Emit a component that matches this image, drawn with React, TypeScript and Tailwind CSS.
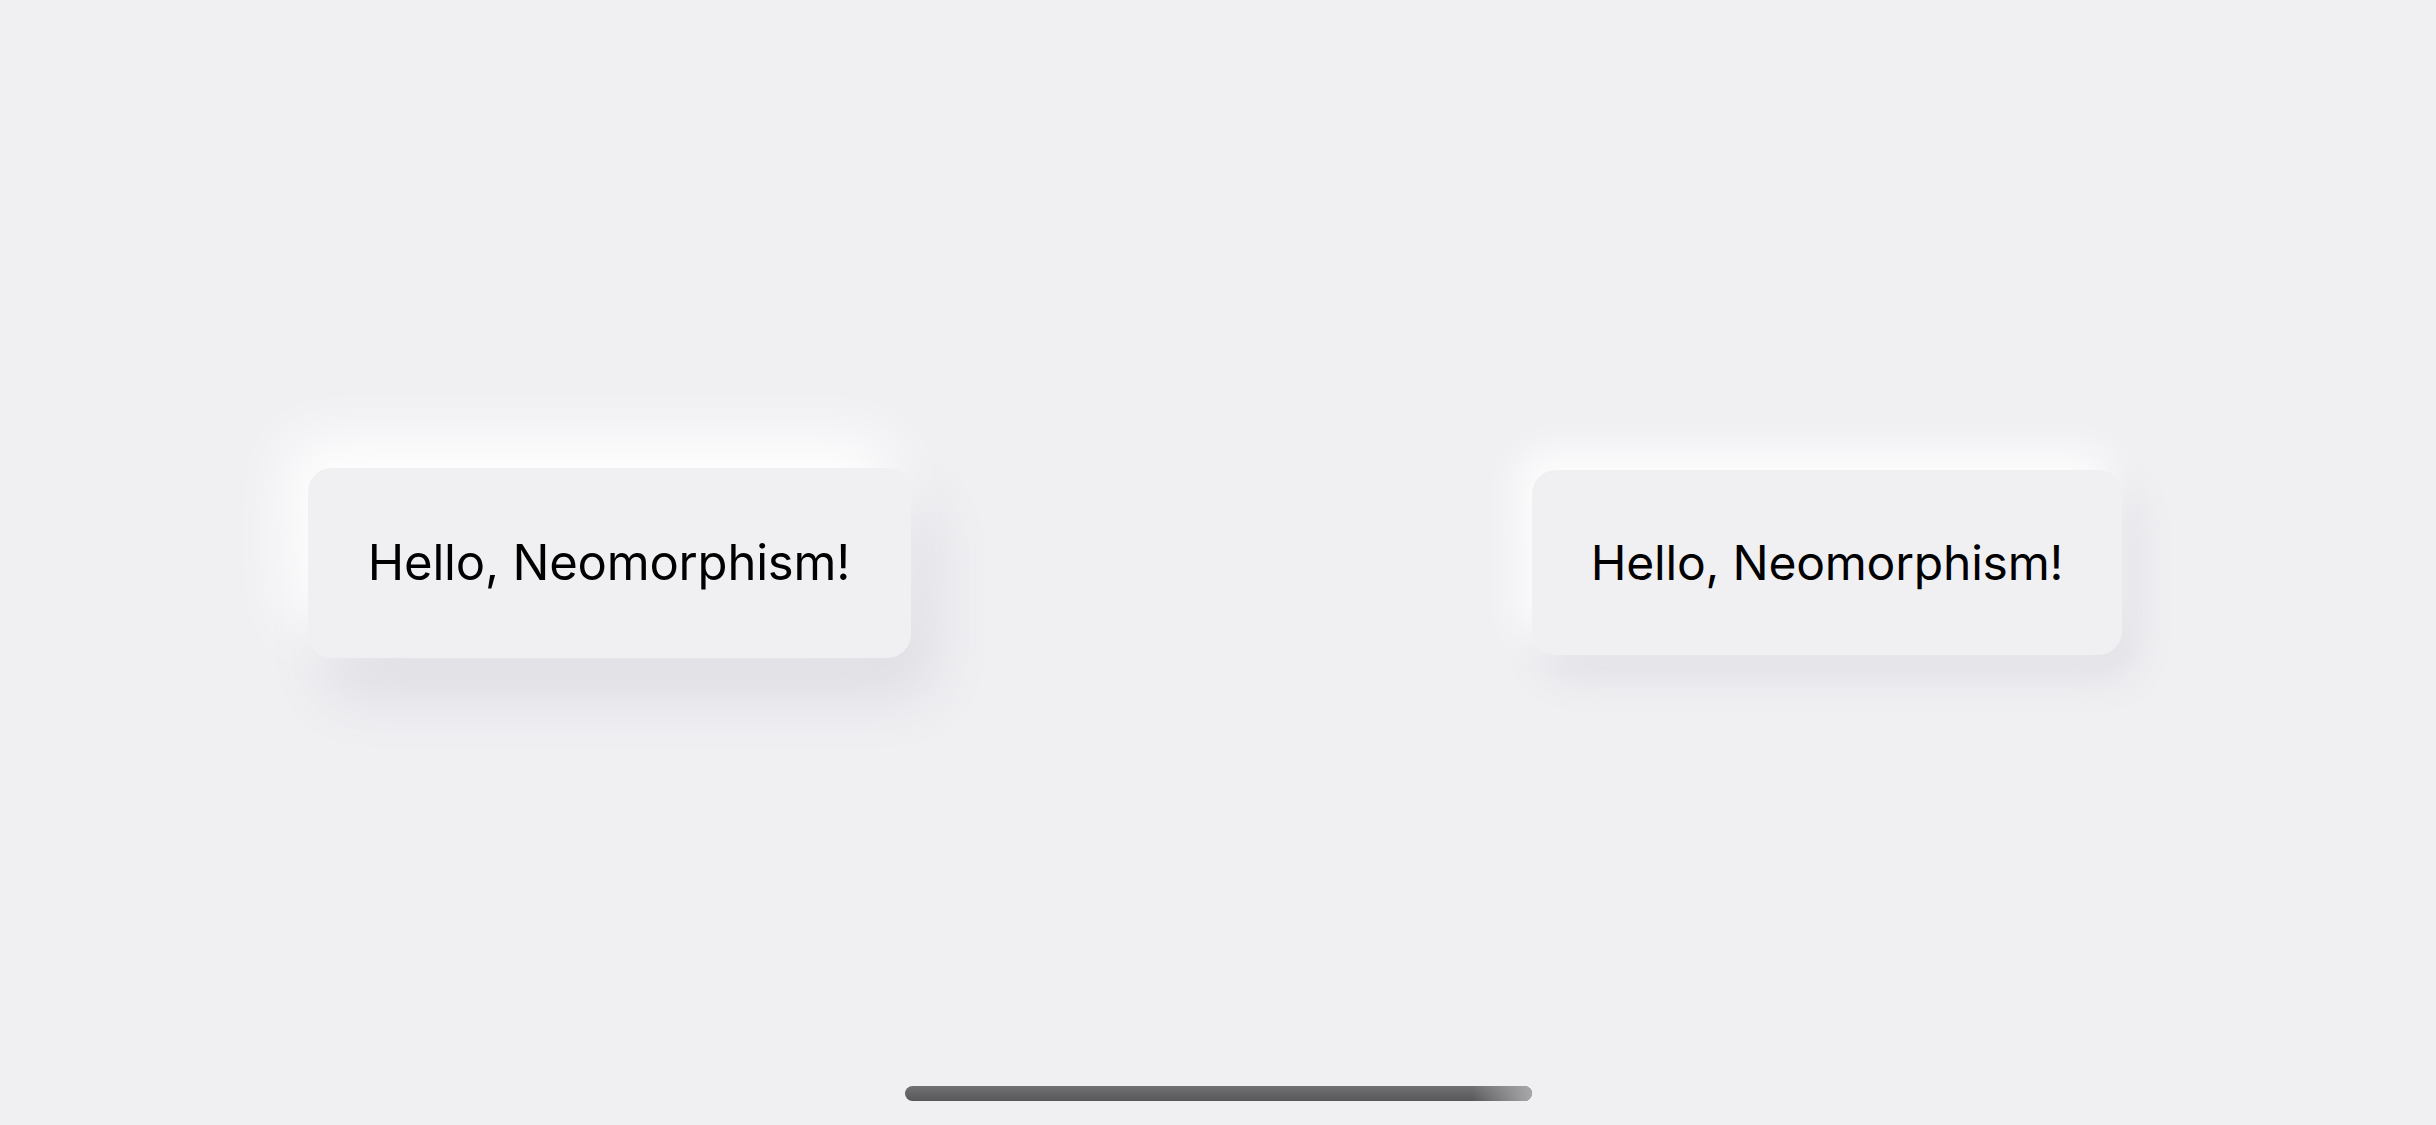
export default function App() {
  return (
    <div className="relative w-[2436px] h-[1125px] overflow-hidden bg-[#f0f0f3]" style={{ fontFamily: 'Inter, "Liberation Sans", sans-serif' }}>
      <div className="flex h-full w-full">
        <div className="flex flex-1 items-center justify-center">
          <div className="flex h-[190px] w-[603px] items-center justify-center rounded-[24px] bg-[#f0f0f3] shadow-[-20px_-28px_60px_#ffffff,20px_36px_60px_#dcdce2]">
            <span className="text-[49px] leading-none tracking-[-0.2px] text-black">Hello, Neomorphism!</span>
          </div>
        </div>
        <div className="flex flex-1 items-center justify-center">
          <div className="flex h-[185px] w-[590px] items-center justify-center rounded-[24px] bg-[#f0f0f3] shadow-[-12px_-16px_40px_#ffffff,12px_20px_40px_#dedee4]">
            <span className="text-[48px] leading-none tracking-[-0.2px] text-black">Hello, Neomorphism!</span>
          </div>
        </div>
      </div>
      <div className="absolute bottom-[24px] left-[905px] h-[15px] w-[627px] overflow-hidden rounded-full bg-gradient-to-b from-[#717173] to-[#58585a]">
        <div className="absolute right-0 top-0 h-full w-[60px] bg-gradient-to-r from-transparent to-[#a8a8aa]" />
      </div>
    </div>
  );
}
